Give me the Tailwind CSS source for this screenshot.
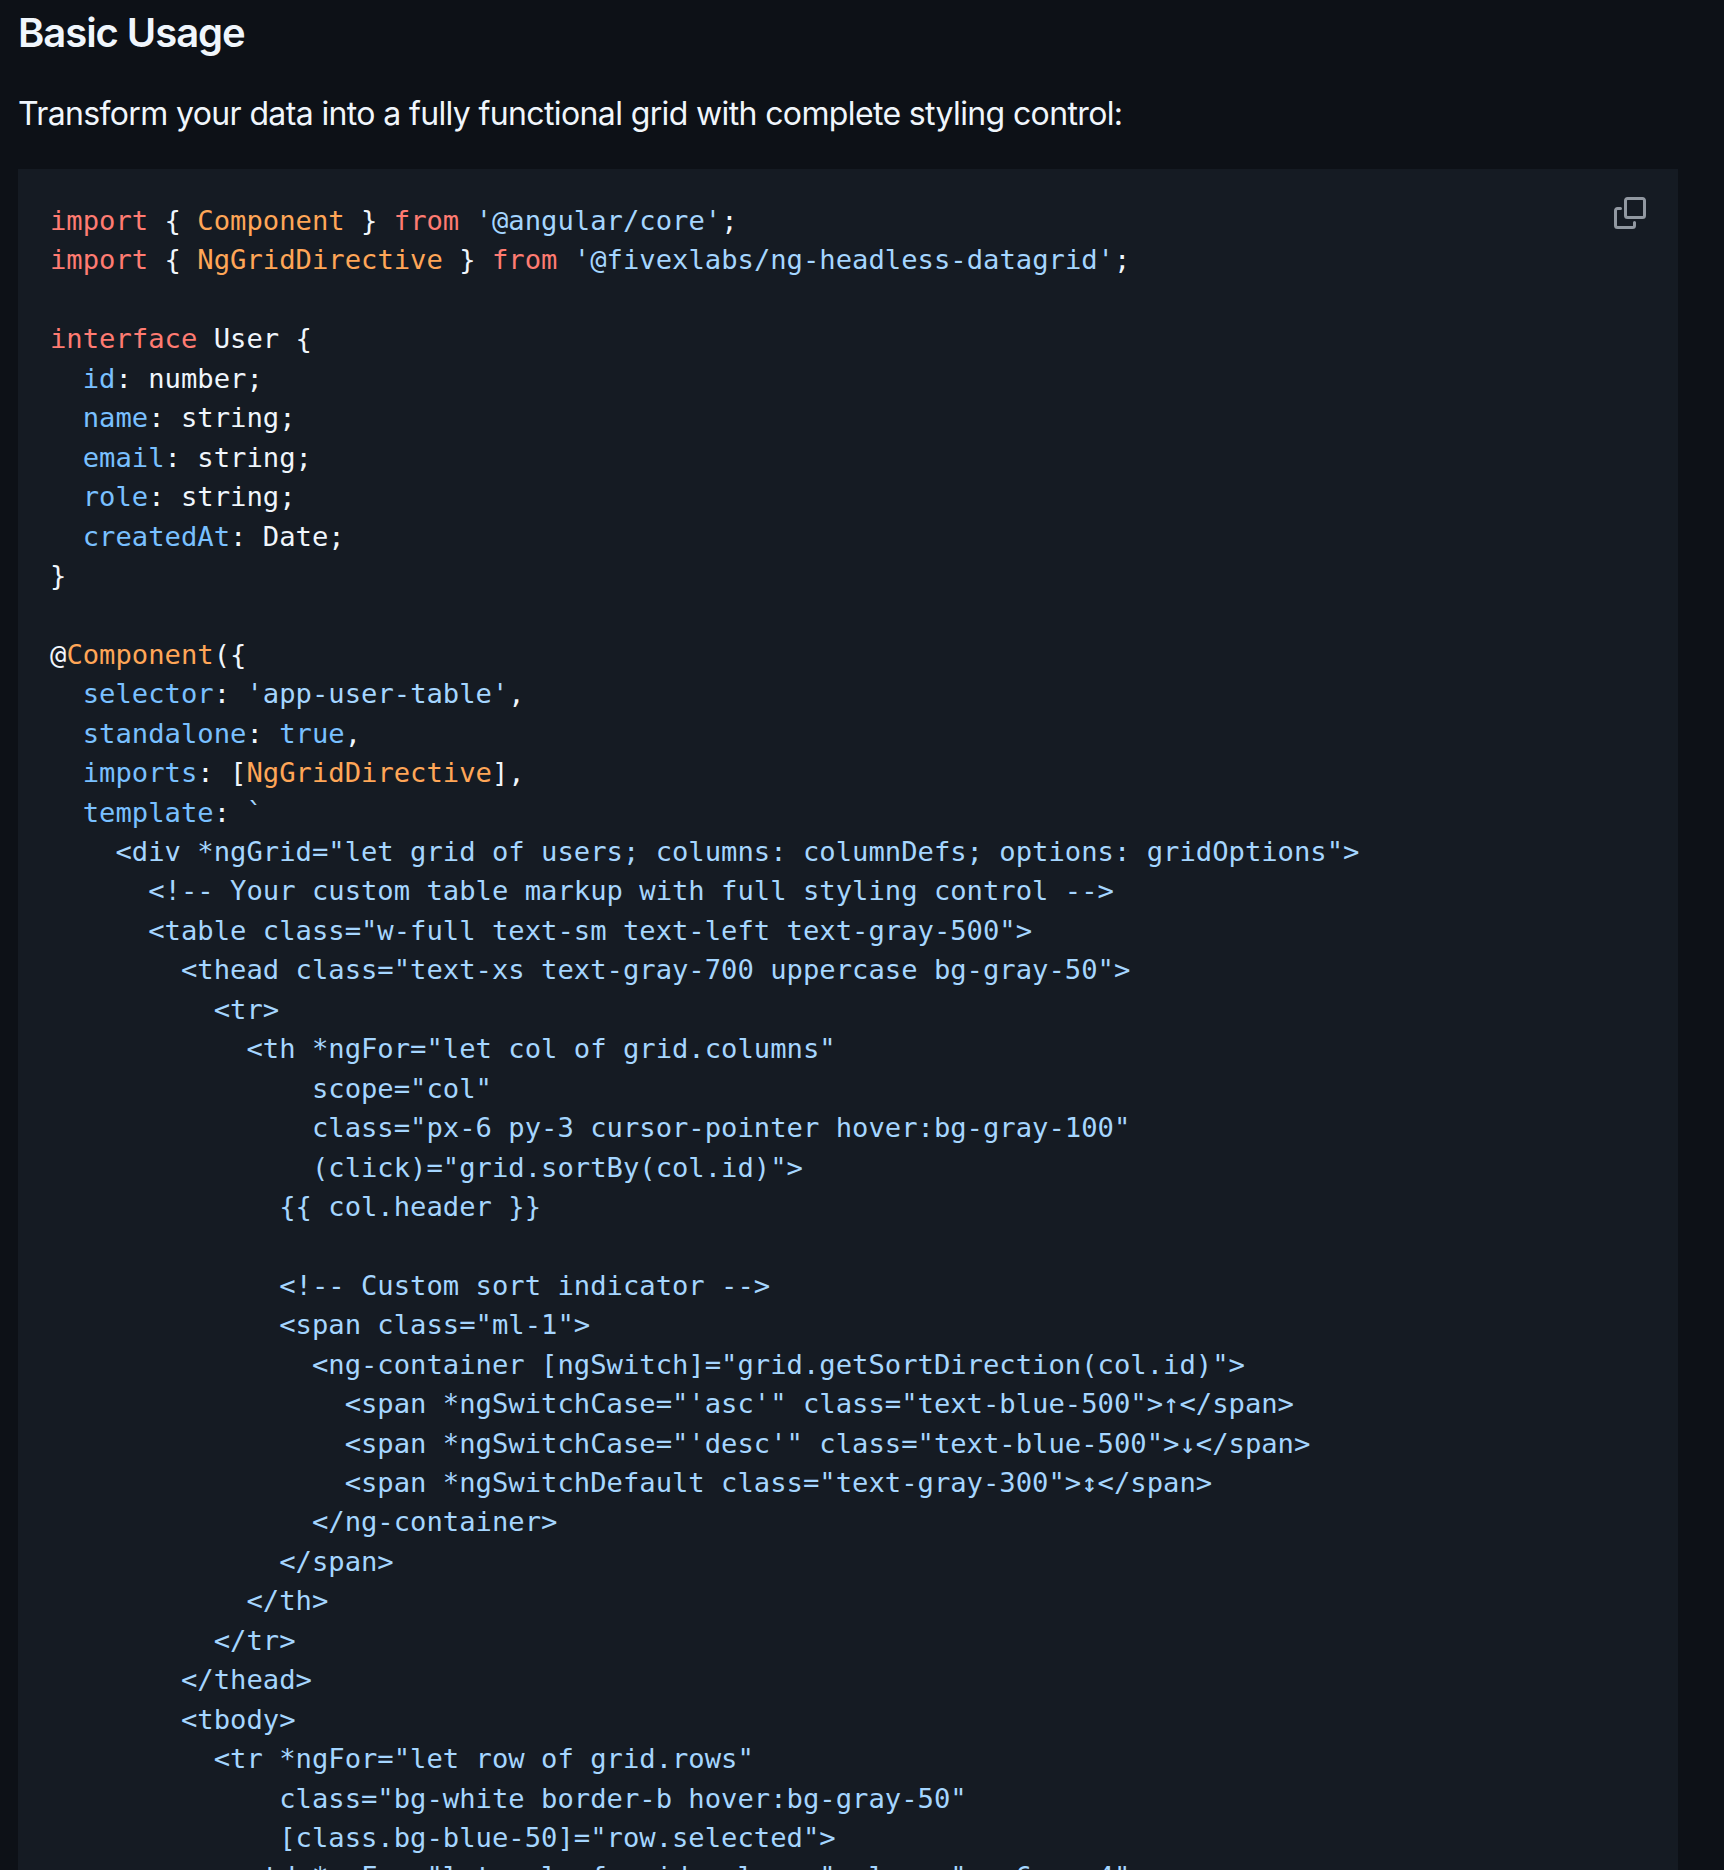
<!DOCTYPE html>
<html lang="en">

<head>
    <meta charset="utf-8" />
    <title>Basic Usage</title>
    <script src="https://cdn.jsdelivr.net/npm/@tailwindcss/browser@4"></script>
</head>

<body class="bg-[#0d1117] text-[#f0f6fc] h-[1870px] overflow-hidden font-['Inter',sans-serif]">
    <main class="pl-[18px] pr-[46px]">
        <!-- Heading -->
        <h3 class="pt-[10px] text-[40px] leading-[46px] font-semibold tracking-[-1.05px]">Basic Usage</h3>
        <p class="mt-[34px] text-[32px] leading-[48px] tracking-[-0.63px]">Transform your data into a fully functional grid with complete styling control:</p>

        <!-- Code block -->
        <div class="relative mt-[31px] bg-[#151b23] p-[32px]">
            <button class="absolute top-[28px] right-[32px] text-[#9198a1]">
                <svg class="w-[32px] h-[32px] block" viewBox="0 0 16 16" fill="currentColor">
                    <path d="M0 6.75C0 5.784.784 5 1.75 5h1.5a.75.75 0 0 1 0 1.5h-1.5a.25.25 0 0 0-.25.25v7.5c0 .138.112.25.25.25h7.5a.25.25 0 0 0 .25-.25v-1.5a.75.75 0 0 1 1.5 0v1.5A1.75 1.75 0 0 1 9.25 16h-7.5A1.75 1.75 0 0 1 0 14.25Z"></path>
                    <path d="M5 1.75C5 .784 5.784 0 6.75 0h7.5C15.216 0 16 .784 16 1.75v7.5A1.75 1.75 0 0 1 14.25 11h-7.5A1.75 1.75 0 0 1 5 9.25Zm1.75-.25a.25.25 0 0 0-.25.25v7.5c0 .138.112.25.25.25h7.5a.25.25 0 0 0 .25-.25v-7.5a.25.25 0 0 0-.25-.25Z"></path>
                </svg>
            </button>
            <pre class="font-['DejaVu_Sans_Mono',monospace] text-[27.2px] leading-[39.44px]"><span class="text-[#ff7b72]">import</span> { <span class="text-[#ffa657]">Component</span> } <span class="text-[#ff7b72]">from</span> <span class="text-[#a5d6ff]">'@angular/core'</span>;
<span class="text-[#ff7b72]">import</span> { <span class="text-[#ffa657]">NgGridDirective</span> } <span class="text-[#ff7b72]">from</span> <span class="text-[#a5d6ff]">'@fivexlabs/ng-headless-datagrid'</span>;

<span class="text-[#ff7b72]">interface</span> User {
  <span class="text-[#79c0ff]">id</span>: number;
  <span class="text-[#79c0ff]">name</span>: string;
  <span class="text-[#79c0ff]">email</span>: string;
  <span class="text-[#79c0ff]">role</span>: string;
  <span class="text-[#79c0ff]">createdAt</span>: Date;
}

@<span class="text-[#ffa657]">Component</span>({
  <span class="text-[#79c0ff]">selector</span>: <span class="text-[#a5d6ff]">'app-user-table'</span>,
  <span class="text-[#79c0ff]">standalone</span>: <span class="text-[#79c0ff]">true</span>,
  <span class="text-[#79c0ff]">imports</span>: [<span class="text-[#ffa657]">NgGridDirective</span>],
  <span class="text-[#79c0ff]">template</span>: <span class="text-[#a5d6ff]">`
    &lt;div *ngGrid="let grid of users; columns: columnDefs; options: gridOptions"&gt;
      &lt;!-- Your custom table markup with full styling control --&gt;
      &lt;table class="w-full text-sm text-left text-gray-500"&gt;
        &lt;thead class="text-xs text-gray-700 uppercase bg-gray-50"&gt;
          &lt;tr&gt;
            &lt;th *ngFor="let col of grid.columns"
                scope="col"
                class="px-6 py-3 cursor-pointer hover:bg-gray-100"
                (click)="grid.sortBy(col.id)"&gt;
              {{ col.header }}

              &lt;!-- Custom sort indicator --&gt;
              &lt;span class="ml-1"&gt;
                &lt;ng-container [ngSwitch]="grid.getSortDirection(col.id)"&gt;
                  &lt;span *ngSwitchCase="'asc'" class="text-blue-500"&gt;↑&lt;/span&gt;
                  &lt;span *ngSwitchCase="'desc'" class="text-blue-500"&gt;↓&lt;/span&gt;
                  &lt;span *ngSwitchDefault class="text-gray-300"&gt;↕&lt;/span&gt;
                &lt;/ng-container&gt;
              &lt;/span&gt;
            &lt;/th&gt;
          &lt;/tr&gt;
        &lt;/thead&gt;
        &lt;tbody&gt;
          &lt;tr *ngFor="let row of grid.rows"
              class="bg-white border-b hover:bg-gray-50"
              [class.bg-blue-50]="row.selected"&gt;
            &lt;td *ngFor="let col of grid.columns" class="px-6 py-4"&gt;</span></pre>
        </div>
    </main>
</body>

</html>
